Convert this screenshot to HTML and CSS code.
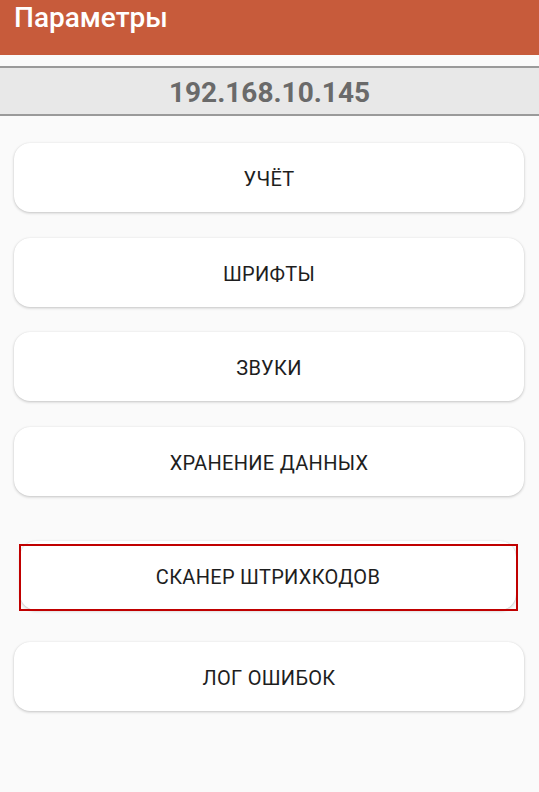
FILE: index.html
```html
<!DOCTYPE html>
<html lang="ru">
<head>
<meta charset="utf-8">
<title>Параметры</title>
<link rel="stylesheet" href="styles.css">
</head>
<body>
<header class="appbar"><span class="appbar-title">Параметры</span></header>
<div class="ip-bar">192.168.10.145</div>
<main class="menu">
  <button class="menu-btn">УЧЁТ</button>
  <button class="menu-btn">ШРИФТЫ</button>
  <button class="menu-btn">ЗВУКИ</button>
  <button class="menu-btn">ХРАНЕНИЕ ДАННЫХ</button>
  <button class="menu-btn menu-btn-focused">СКАНЕР ШТРИХКОДОВ<span class="focus-frame"></span></button>
  <button class="menu-btn menu-btn-after">ЛОГ ОШИБОК</button>
</main>
</body>
</html>
```

FILE: styles.css
```css
html, body {
  margin: 0;
  padding: 0;
  background: #fafafa;
  font-family: Roboto, "Noto Sans", "Liberation Sans", sans-serif;
}
body {
  width: 539px;
  height: 792px;
  overflow: hidden;
}
.appbar {
  height: 55px;
  background: #c75b3b;
  display: flex;
  align-items: flex-start;
  padding: 0 14px;
  box-sizing: border-box;
}
.appbar-title {
  color: #ffffff;
  font-size: 28px;
  font-weight: 500;
  line-height: 35px;
}
.ip-bar {
  margin-top: 11px;
  height: 46px;
  padding-top: 3px;
  box-sizing: content-box;
  height: 43px;
  border-top: 2px solid #9a9a9a;
  border-bottom: 2px solid #9a9a9a;
  background: #e8e8e8;
  color: #6a6a6a;
  font-size: 28px;
  font-weight: 700;
  display: flex;
  align-items: center;
  justify-content: center;
}
.menu {
  display: flex;
  flex-direction: column;
  gap: 25.7px;
  padding: 27px 15px 0 14px;
}
.menu-btn {
  position: relative;
  height: 69px;
  border: none;
  border-radius: 16px;
  background: #ffffff;
  box-shadow: 0 1px 3px rgba(0, 0, 0, 0.22), 0 0 1px rgba(0, 0, 0, 0.08);
  font-family: Roboto, "Noto Sans", "Liberation Sans", sans-serif;
  font-size: 20px;
  font-weight: 400;
  letter-spacing: 0.3px;
  color: #1e1e1e;
  display: flex;
  align-items: center;
  justify-content: center;
  padding: 3px 0 0 0;
}
.menu-btn-focused {
  margin: 19px 8px 0 6px;
}
.menu-btn-after {
  margin-top: 7px;
}
.focus-frame {
  position: absolute;
  top: 3px;
  left: -1px;
  right: -2px;
  bottom: -1px;
  border: 2px solid #c00000;
  pointer-events: none;
}
```
